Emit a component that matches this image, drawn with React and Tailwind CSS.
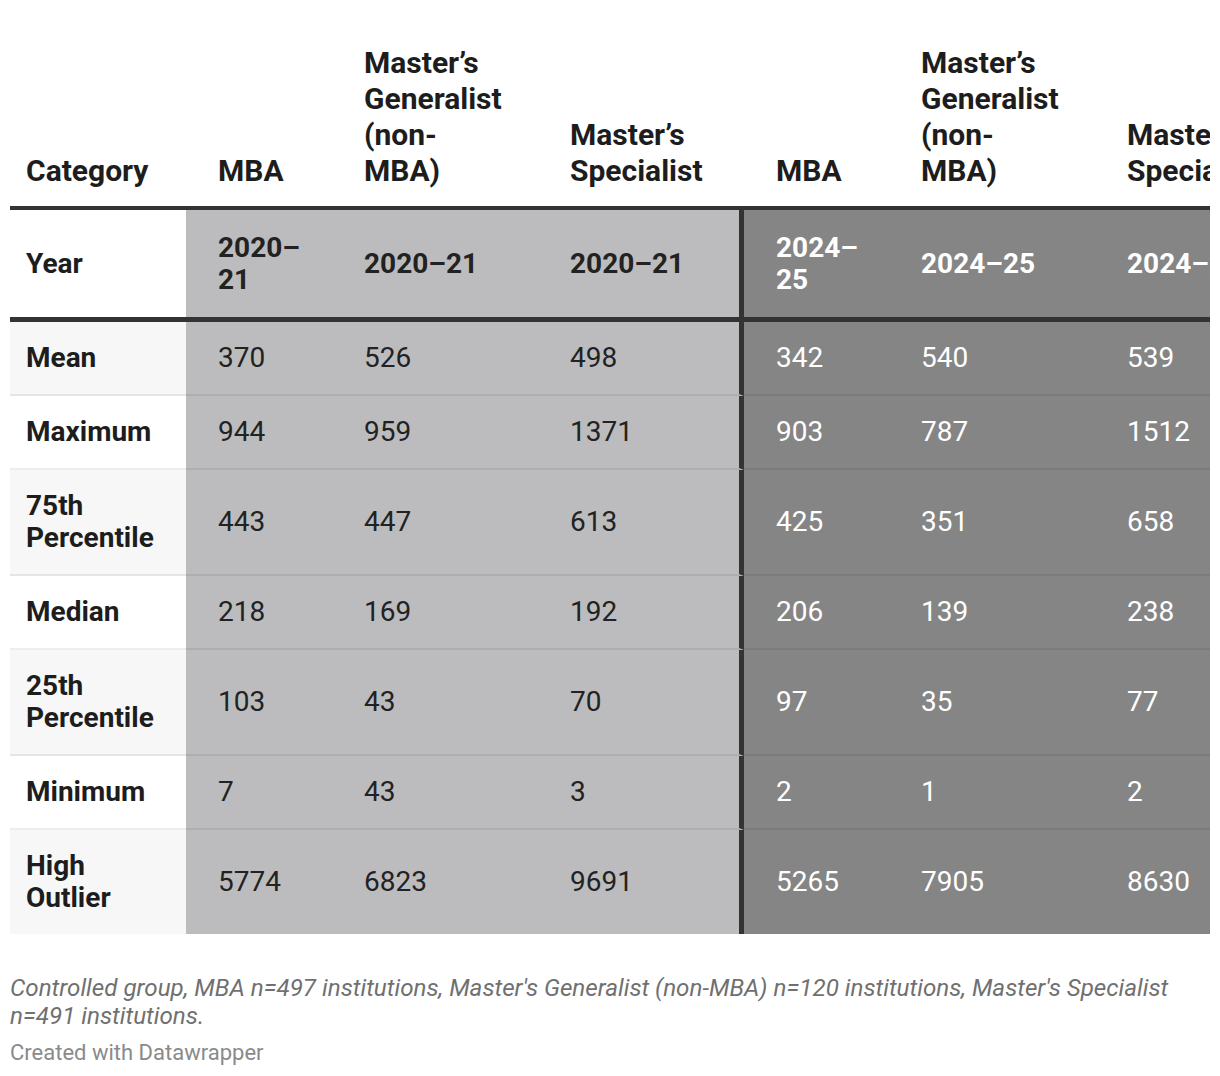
import React from "react";

const rows = [
  ["Mean", "370", "526", "498", "342", "540", "539"],
  ["Maximum", "944", "959", "1371", "903", "787", "1512"],
  ["75th Percentile", "443", "447", "613", "425", "351", "658"],
  ["Median", "218", "169", "192", "206", "139", "238"],
  ["25th Percentile", "103", "43", "70", "97", "35", "77"],
  ["Minimum", "7", "43", "3", "2", "1", "2"],
  ["High Outlier", "5774", "6823", "9691", "5265", "7905", "8630"],
];

const heads = [
  "Category",
  "MBA",
  "Master’s Generalist (non-MBA)",
  "Master’s Specialist",
  "MBA",
  "Master’s Generalist (non-MBA)",
  "Master’s Specialist",
];

const years = ["Year", "2020–21", "2020–21", "2020–21", "2024–25", "2024–25", "2024–25"];

// column backgrounds / text colours
const colBg = (i) =>
  i === 0 ? "" : i <= 3 ? "bg-[#bcbcbe] text-[#222]" : "bg-[#858585] text-white";

const sep = (i) => (i === 3 ? "border-r-[5px] border-r-[#333]" : "");

const App = () => {
  return (
    <div className="bg-white px-[10px] pt-[33px] pb-4 font-['Roboto',sans-serif] text-[#1d1d1d]">
      <div className="w-[1200px] overflow-hidden">
        <table className="table-fixed border-separate border-spacing-0 w-[1293px]">
          <colgroup>
            <col className="w-[176px]" />
            <col className="w-[146px]" />
            <col className="w-[206px]" />
            <col className="w-[206px]" />
            <col className="w-[145px]" />
            <col className="w-[206px]" />
            <col className="w-[208px]" />
          </colgroup>
          <thead>
            <tr>
              {heads.map((h, i) => (
                <th
                  key={i}
                  className={`align-bottom text-left font-bold text-[30px] leading-[36px] pt-3 pb-[17px] border-b-4 border-b-[#333] ${
                    i === 0 ? "pl-4 pr-7" : "pl-8 pr-7"
                  }`}
                >
                  {h}
                </th>
              ))}
            </tr>
          </thead>
          <tbody>
            <tr>
              {years.map((y, i) => (
                <td
                  key={i}
                  className={`align-middle text-left font-bold text-[28px] leading-[32px] pt-[22px] pb-[21px] border-b-[5px] border-b-[#333] ${
                    i === 0 ? "pl-4 pr-7 bg-white" : "pl-8 pr-7"
                  } ${colBg(i)} ${sep(i)}`}
                >
                  {y}
                </td>
              ))}
            </tr>
            {rows.map((r, ri) => (
              <tr key={ri}>
                {r.map((c, i) => (
                  <td
                    key={i}
                    className={`align-middle text-left text-[28px] leading-[32px] py-5 ${
                      ri < rows.length - 1 ? "border-b-2 border-b-black/[0.07]" : ""
                    } ${
                      i === 0
                        ? `pl-4 pr-7 font-bold ${ri % 2 === 0 ? "bg-[#f7f7f7]" : "bg-white"}`
                        : "pl-8 pr-7"
                    } ${colBg(i)} ${sep(i)}`}
                  >
                    {c}
                  </td>
                ))}
              </tr>
            ))}
          </tbody>
        </table>
      </div>
      <div className="mt-[40px] w-[1200px] pr-[20px]">
        <p className="italic text-[24.2px] leading-[28px] text-[#707070]">
          Controlled group, MBA n=497 institutions, Master's Generalist (non-MBA) n=120 institutions, Master's Specialist n=491 institutions.
        </p>
        <p className="mt-[10px] text-[22px] leading-[26px] text-[#8a8a8a]">Created with Datawrapper</p>
      </div>
    </div>
  );
};

export default App;
